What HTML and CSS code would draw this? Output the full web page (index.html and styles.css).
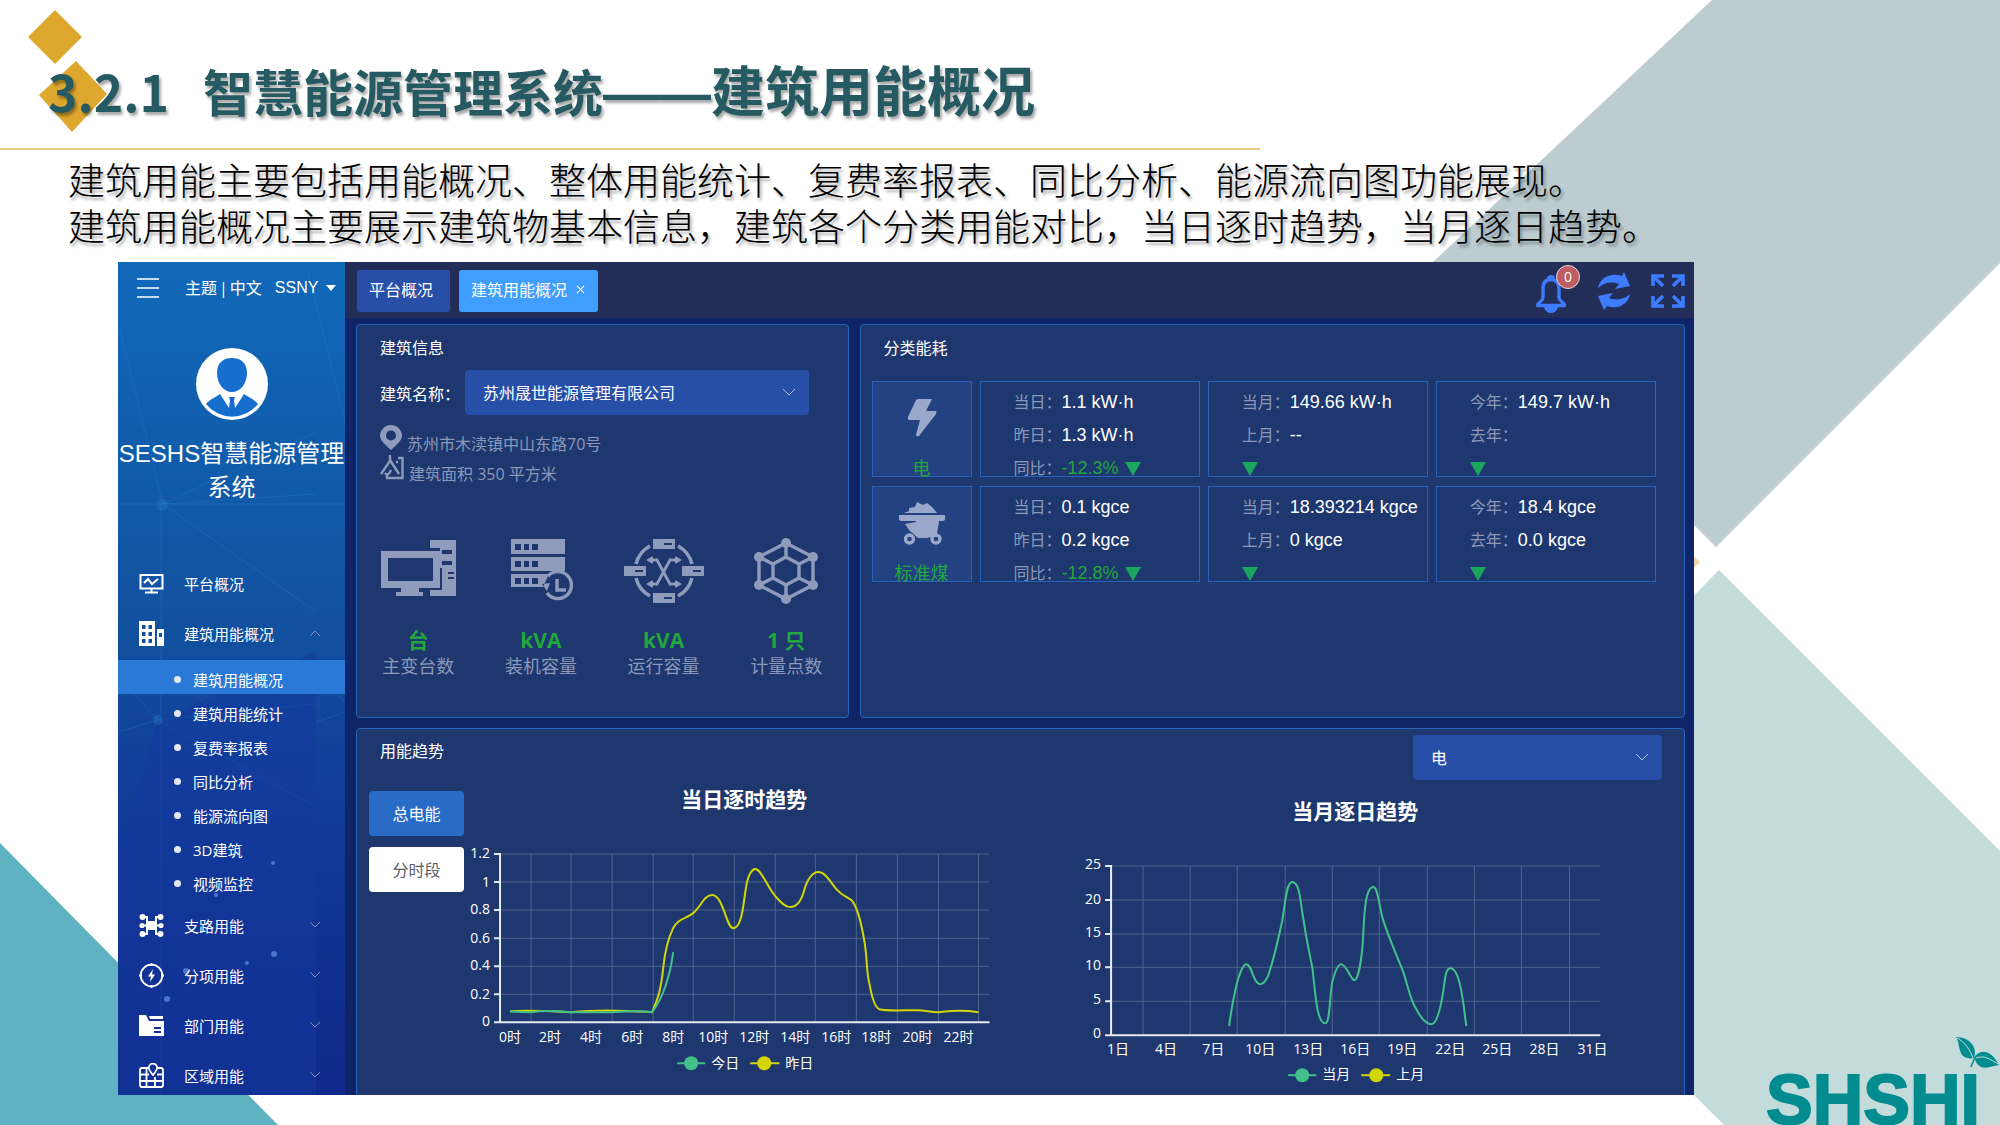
FILE: index.html
```html
<!DOCTYPE html>
<html lang="zh-CN">
<head>
<meta charset="utf-8">
<meta name="viewport" content="width=device-width, initial-scale=1">
<title>智慧能源管理系统 - 建筑用能概况</title>
<link rel="stylesheet" href="styles.css">
</head>
<body>
<svg class="backdrop" viewBox="0 0 2000 1125" preserveAspectRatio="none" aria-hidden="true">
  <path fill="#bcccd0" d="M1712 0H2000V263L1716 547 1432 263Z"/>
  <path fill="#c3dbdb" d="M1719 570L2000 851V1125H1724L1446 848Z"/>
  <path fill="#5fb2c1" d="M0 843L278 1125H0Z"/>
  <path fill="#f0d7ab" d="M1690 552L1700 562 1690 572Z"/>
</svg>
<div class="page">
  <header class="heading">
    <svg class="diamonds" width="80" height="124" viewBox="28 10 80 124" aria-hidden="true">
      <path fill="#dea72d" d="M55 10L82 37 55 64 28 37ZM76 61L107 94 72 132 39 95Z"/>
    </svg>
    <h1 class="heading-title"><span class="heading-number">3.2.1</span>智慧能源管理系统<span class="heading-dash">——</span><span class="heading-part">建筑用能概况</span></h1>
  </header>
  <div class="intro">
    <p>建筑用能主要包括用能概况、整体用能统计、复费率报表、同比分析、能源流向图功能展现。</p>
    <p>建筑用能概况主要展示建筑物基本信息，建筑各个分类用能对比，当日逐时趋势，当月逐日趋势。</p>
  </div>

  <div class="dashboard">
    <aside class="sidebar">
      <svg class="constellation" viewBox="0 0 227 833" preserveAspectRatio="none" aria-hidden="true">
        <g stroke="#2a86cc" stroke-opacity=".3" fill="none">
          <path d="M0 60L45 242 198 170M0 242H227M45 242L198 232M45 242L198 350M43 242V833M190 10L227 160M0 415L40 458 198 442M0 470L40 458 198 545M198 410L227 440M198 460L227 450"/>
        </g>
        <path fill="#13389d" fill-opacity=".5" d="M40 458L198 390V833H0V600Z"/>
        <g fill="#2f86cf" fill-opacity=".3"><circle cx="44" cy="243" r="6"/><circle cx="40" cy="458" r="5"/></g>
        <g fill="#5d86dc" fill-opacity=".8"><circle cx="155" cy="601" r="2"/><circle cx="98" cy="633" r="2"/><circle cx="156" cy="692" r="3"/><circle cx="129" cy="701" r="2"/><circle cx="49" cy="737" r="3"/><circle cx="68" cy="709" r="3"/></g>
      </svg>
      <div class="side-top">
        <button class="menu-toggle" type="button" aria-label="菜单">
          <svg width="22" height="20" viewBox="0 0 22 20"><path d="M0 1H22M0 10H22M0 19H22" stroke="#fff" stroke-width="1.4"/></svg>
        </button>
        <div class="side-lang"><a href="#">主题</a><span>|</span><a href="#">中文</a></div>
        <button class="side-user" type="button">SSNY
          <svg width="10" height="6" viewBox="0 0 10 6"><path fill="#fff" d="M0 0H10L5 6Z"/></svg>
        </button>
      </div>
      <svg class="avatar" width="72" height="72" viewBox="0 0 72 72" aria-hidden="true">
        <circle cx="36" cy="36" r="36" fill="#fff"/>
        <path fill="#166fcd" d="M36 10C44 10 51 14 51 25 51 36 44 44 36 44S21 36 21 25C21 14 28 10 36 10ZM10 56C14 51 20 49 24 46L33 60 34 52 33 49H39L38 52 39 60 48 46C52 49 58 51 62 56A33 33 0 0 1 10 56Z"/>
      </svg>
      <div class="side-title">SESHS智慧能源管理系统</div>
      <nav class="side-nav">
        <a class="nav-item" href="#">
          <svg class="nav-icon" viewBox="0 0 25 25" fill="none" stroke="#fff" stroke-width="2"><path d="M1.5 4H23.500V17.500H1.500ZM5 12L9 8 13 13 19 8M12.500 18V21M6 21.500H19"/></svg>
          <span>平台概况</span>
        </a>
        <a class="nav-item" href="#">
          <svg class="nav-icon" viewBox="0 0 25 25" fill="#fff" fill-rule="evenodd"><path d="M0 0H16V25H0ZM3 4V8H6.500V4ZM9.500 4V8H13V4ZM3 11V15H6.500V11ZM9.500 11V15H13V11ZM3 18V22H6.500V18ZM9.500 18V22H13V18ZM18 8H25V25H18ZM20 12V16H23V12Z"/></svg>
          <span>建筑用能概况</span>
          <svg class="nav-arrow" viewBox="0 0 12 12"><path d="M1 9L6 4 11 9"/></svg>
        </a>
        <ul class="sub-nav">
          <li class="sub-item active"><a href="#">建筑用能概况</a></li>
          <li class="sub-item"><a href="#">建筑用能统计</a></li>
          <li class="sub-item"><a href="#">复费率报表</a></li>
          <li class="sub-item"><a href="#">同比分析</a></li>
          <li class="sub-item"><a href="#">能源流向图</a></li>
          <li class="sub-item"><a href="#">3D建筑</a></li>
          <li class="sub-item"><a href="#">视频监控</a></li>
        </ul>
        <a class="nav-item" href="#">
          <svg class="nav-icon" viewBox="0 0 25 25"><path fill="none" stroke="#fff" stroke-width="2" d="M3 4H8V21H3M22 4H17V21H22M3 12.500H22"/><g fill="#fff"><rect x="8" y="8" width="9" height="9" rx="2"/><circle cx="3.500" cy="4" r="3"/><circle cx="3" cy="12.500" r="2.600"/><circle cx="3.500" cy="21" r="3"/><circle cx="21.500" cy="4" r="3"/><circle cx="22" cy="12.500" r="2.600"/><circle cx="21.500" cy="21" r="3"/></g></svg>
          <span>支路用能</span>
          <svg class="nav-arrow" viewBox="0 0 12 12"><path d="M1 3L6 8 11 3"/></svg>
        </a>
        <a class="nav-item" href="#">
          <svg class="nav-icon" viewBox="0 0 25 25"><circle cx="12.500" cy="12.500" r="10.800" fill="none" stroke="#fff" stroke-width="1.800"/><path stroke="#fff" stroke-width="2" d="M12.500 0V3M12.500 22V25M0 12.500H3M22 12.500H25"/><path fill="#fff" d="M14 6L9 13.500H12L11 19 16 11.500H13Z"/></svg>
          <span>分项用能</span>
          <svg class="nav-arrow" viewBox="0 0 12 12"><path d="M1 3L6 8 11 3"/></svg>
        </a>
        <a class="nav-item" href="#">
          <svg class="nav-icon" viewBox="0 0 25 25" fill="#fff" fill-rule="evenodd"><path d="M0 2H7L10 8H25V23H0ZM15 14V16H22V14ZM15 18V20H22V18ZM10 3H24V6H11Z"/></svg>
          <span>部门用能</span>
          <svg class="nav-arrow" viewBox="0 0 12 12"><path d="M1 3L6 8 11 3"/></svg>
        </a>
        <a class="nav-item" href="#">
          <svg class="nav-icon" viewBox="0 0 25 25" fill="none" stroke="#fff" stroke-width="1.800"><path d="M9 5H3Q1 5 1 7V22Q1 24 3 24H22Q24 24 24 22V7Q24 5 22 5H19M1 11.500H10M18 11.500H24M1 18H24M7.500 5V24M16 14V24M14 12C11 8 9.800 7 9.800 4.800A4.200 4.200 0 0 1 18.200 4.800C18.200 7 17 8 14 12Z"/></svg>
          <span>区域用能</span>
          <svg class="nav-arrow" viewBox="0 0 12 12"><path d="M1 3L6 8 11 3"/></svg>
        </a>
      </nav>
    </aside>

    <main class="main">
      <div class="topbar">
        <button class="tab" type="button">平台概况</button>
        <button class="tab tab-current" type="button">建筑用能概况
          <svg width="9" height="9" viewBox="0 0 10 10"><path d="M1 1L9 9M9 1L1 9" stroke="#fff" stroke-width="1.200"/></svg>
        </button>
        <div class="tools">
          <button class="tool tool-bell" type="button" aria-label="通知">
            <svg width="32" height="38" viewBox="0 0 32 38"><path fill="none" stroke="#3d7bff" stroke-width="3.400" stroke-linejoin="round" d="M16 4.500C10 4.500 8 9 8 14V23C8 26 3 27 2.500 30.500H29.500C29 27 24 26 24 23V14C24 9 22 4.500 16 4.500Z"/><path fill="#3d7bff" d="M9 32H23C22 36 19 38 16 38S10 36 9 32ZM12 4A4 4 0 0 1 20 4Z"/></svg>
            <span class="badge">0</span>
          </button>
          <button class="tool" type="button" aria-label="刷新">
            <svg width="34" height="38" viewBox="0 0 34 38"><path fill="#3d7bff" d="M1 16C3 5 14 0 25 4L27 0 33 14 18 17 22 12C14 9 6 11 1 16ZM33 22C31 33 20 38 10 34L7 38 1 24 16 21 12 26C20 29 28 27 33 22Z"/></svg>
          </button>
          <button class="tool" type="button" aria-label="全屏">
            <svg width="34" height="34" viewBox="0 0 34 34" fill="none" stroke="#3d7bff" stroke-width="3.600"><path d="M2 12V2H13M3 3L12 12M21 2H32V12M31 3L22 12M2 22V32H13M3 31L12 22M32 22V32H21M31 31L22 22"/></svg>
          </button>
        </div>
      </div>

      <div class="content">
        <div class="panel-row">
          <section class="panel building">
            <h2 class="panel-title">建筑信息</h2>
            <div class="field">
              <label for="building">建筑名称<span class="colon">：</span></label>
              <div class="select-box building-select">
                <select id="building"><option>苏州晟世能源管理有限公司</option></select>
                <svg class="select-arrow" viewBox="0 0 12 12"><path d="M0 3L6 9 12 3"/></svg>
              </div>
            </div>
            <ul class="facts">
              <li>
                <svg width="22" height="25" viewBox="0 0 22 25"><path fill="#8f9bbb" fill-rule="evenodd" d="M11 0A11 11 0 0 1 22 11C22 16 16 20 11 25 6 20 0 16 0 11A11 11 0 0 1 11 0ZM11 5.500A5 5 0 1 0 11 15.500 5 5 0 0 0 11 5.500Z"/></svg>
                <span>苏州市木渎镇中山东路70号</span>
              </li>
              <li>
                <svg width="24" height="25" viewBox="0 0 24 25" fill="none" stroke="#8f9bbb" stroke-width="2.400"><path d="M10 0V6L1 19M10 5L19 19M16 7H18M22.500 2V23H7V19M5 18Q8 22 11 15M18 3H23"/></svg>
                <span>建筑面积 350 平方米</span>
              </li>
            </ul>
            <ul class="stats">
              <li>
                <svg width="80" height="66" viewBox="0 0 80 66" fill="#8f9bbb" fill-rule="evenodd"><path d="M3 13H62V50H3ZM10 20V43H55V20ZM23 50H41V54H45V58H18V54H23ZM52 2H78V58H52V52H64V30H62V10H52ZM64 12V16H74V12ZM64 23V27H74V23ZM70 34V36H76V34ZM70 39V41H76V39Z"/></svg>
                <b>台</b><span>主变台数</span>
              </li>
              <li>
                <svg width="80" height="66" viewBox="0 0 80 66"><path fill="#8f9bbb" fill-rule="evenodd" d="M10 1H64V16H10ZM14 6V12H20V6ZM23 6V12H28V6ZM31 6V12H37V6ZM10 19H64V33H10ZM14 23V29H20V23ZM23 23V29H28V23ZM31 23V29H37V23ZM10 36H48L42 49H10ZM14 40V46H20V40ZM23 40V46H28V40ZM31 40V46H37V40ZM41 46L49 45 46 53Z"/><path fill="none" stroke="#8f9bbb" stroke-width="3.400" d="M47 38A13.500 13.500 0 1 1 46 55M56 41V52H65"/></svg>
                <b>kVA</b><span>装机容量</span>
              </li>
              <li>
                <svg width="80" height="66" viewBox="0 0 80 66"><g fill="none" stroke="#8f9bbb" stroke-width="3.400"><path d="M12 26A28 28 0 0 1 26 8M54 8A28 28 0 0 1 68 26M68 40A28 28 0 0 1 54 58M26 58A28 28 0 0 1 12 40"/><path stroke-width="2.800" d="M27 22H33L46 46H53M27 46H33L46 22H53"/></g><path fill="#8f9bbb" fill-rule="evenodd" d="M29 1H51V11H29ZM40 5V7H48V5ZM29 55H51V65H29ZM40 59V61H48V59ZM0 28H22V38H0ZM11 32V34H19V32ZM58 28H80V38H58ZM69 32V34H77V32ZM22 22L29 18V26ZM22 46L29 42V50ZM58 22L51 18V26ZM58 46L51 42V50Z"/></svg>
                <b>kVA</b><span>运行容量</span>
              </li>
              <li>
                <svg width="80" height="66" viewBox="0 0 80 66"><g fill="none" stroke="#8f9bbb" stroke-width="3.400"><path d="M40 5L67 19V47L40 61 13 47V19ZM40 19L53 26V40L40 47 27 40V26ZM40 5V19M40 47V61M13 19L27 26M67 19L53 26M13 47L27 40M67 47L53 40"/></g><g fill="#8f9bbb"><circle cx="40" cy="5" r="5"/><circle cx="40" cy="61" r="5"/><circle cx="13" cy="19" r="5"/><circle cx="67" cy="19" r="5"/><circle cx="13" cy="47" r="5"/><circle cx="67" cy="47" r="5"/></g></svg>
                <b>1 只</b><span>计量点数</span>
              </li>
            </ul>
          </section>

          <section class="panel energy">
            <h2 class="panel-title">分类能耗</h2>
            <div class="energy-grid">
              <div class="kind">
                <svg width="46" height="46" viewBox="0 0 46 46"><path fill="#9aa9cb" d="M19 2H33L27 14H37Q38 15 37 17L20 39Q17 40 17 38L21 23H10Q8 22 9 20L17 3Z"/></svg>
                <span>电</span>
              </div>
              <dl class="cell"><div><dt>当日<span class="colon">：</span></dt><dd>1.1 kW·h</dd></div><div><dt>昨日<span class="colon">：</span></dt><dd>1.3 kW·h</dd></div><div><dt>同比<span class="colon">：</span></dt><dd class="down">-12.3%</dd><i class="fall"></i></div></dl>
              <dl class="cell"><div><dt>当月<span class="colon">：</span></dt><dd>149.66 kW·h</dd></div><div><dt>上月<span class="colon">：</span></dt><dd>--</dd></div><div><i class="fall"></i></div></dl>
              <dl class="cell"><div><dt>今年<span class="colon">：</span></dt><dd>149.7 kW·h</dd></div><div><dt>去年<span class="colon">：</span></dt><dd></dd></div><div><i class="fall"></i></div></dl>
              <div class="kind">
                <svg width="46" height="46" viewBox="0 0 46 46"><path fill="#9aa9cb" d="M5 11L10 9V6L16 5 18 0 24 3 28 1 33 5 38 11ZM0 13H46V17Q46 19 43 19H40L38 32 32 35 28 36H19L10 28 6 22 17 20V19H3Q0 19 0 17Z"/><g fill="#234281" stroke="#9aa9cb" stroke-width="3.400"><circle cx="10.500" cy="37" r="4"/><circle cx="37" cy="37" r="4"/></g></svg>
                <span>标准煤</span>
              </div>
              <dl class="cell"><div><dt>当日<span class="colon">：</span></dt><dd>0.1 kgce</dd></div><div><dt>昨日<span class="colon">：</span></dt><dd>0.2 kgce</dd></div><div><dt>同比<span class="colon">：</span></dt><dd class="down">-12.8%</dd><i class="fall"></i></div></dl>
              <dl class="cell"><div><dt>当月<span class="colon">：</span></dt><dd>18.393214 kgce</dd></div><div><dt>上月<span class="colon">：</span></dt><dd>0 kgce</dd></div><div><i class="fall"></i></div></dl>
              <dl class="cell"><div><dt>今年<span class="colon">：</span></dt><dd>18.4 kgce</dd></div><div><dt>去年<span class="colon">：</span></dt><dd>0.0 kgce</dd></div><div><i class="fall"></i></div></dl>
            </div>
          </section>
        </div>

        <section class="panel trend">
          <div class="trend-day">
            <h2 class="panel-title">用能趋势</h2>
            <div class="trend-body">
              <div class="modes">
                <button class="mode mode-on" type="button">总电能</button>
                <button class="mode" type="button">分时段</button>
              </div>
              <svg class="chart" viewBox="464 785 556 315" role="img" aria-label="当日逐时趋势">
                <text class="chart-title" x="744" y="809">当日逐时趋势</text>
                <path class="grid" d="M500 856H989M500 884H989M500 912H989M500 940H989M500 968H989M500 996H989M531 856V1024M571 856V1024M612 856V1024M653 856V1024M693 856V1024M734 856V1024M775 856V1024M815 856V1024M856 856V1024M897 856V1024M938 856V1024M978 856V1024"/>
                <path class="axis" d="M500 855V1024M494 1024H989M494 856H500M494 884H500M494 912H500M494 940H500M494 968H500M494 996H500"/>
                <g class="tick-y"><text x="490" y="860">1.2</text><text x="490" y="889">1</text><text x="490" y="916">0.8</text><text x="490" y="945">0.6</text><text x="490" y="972">0.4</text><text x="490" y="1001">0.2</text><text x="490" y="1028">0</text></g>
                <g class="tick-x"><text x="510" y="1044">0时</text><text x="550" y="1044">2时</text><text x="591" y="1044">4时</text><text x="632" y="1044">6时</text><text x="673" y="1044">8时</text><text x="713" y="1044">10时</text><text x="754" y="1044">12时</text><text x="795" y="1044">14时</text><text x="836" y="1044">16时</text><text x="876" y="1044">18时</text><text x="917" y="1044">20时</text><text x="958" y="1044">22时</text></g>
                <path class="line yellow" d="M510 1013C530 1012 550 1013 571 1014 590 1012 612 1012 632 1013 641 1013 648 1014 652 1014 658 1000 661 990 663 970 665 950 668 940 673 930 678 920 686 921 693 915 701 908 704 897 712 897 723 897 726 930 733 930 742 930 743 905 746 888 748 876 752 871 755 871 761 871 767 889 775 898 781 905 785 909 790 909 797 909 801 903 804 892 807 880 813 874 818 874 825 874 830 884 836 891 843 899 848 899 852 903 858 911 861 925 864 943 867 960 866 975 869 985 871 997 874 1009 879 1011 885 1013 900 1012 917 1012 925 1012 930 1014 938 1014 948 1013 958 1011 978 1014"/>
                <path class="line green" d="M510 1013C520 1014 525 1014 531 1014 545 1012 560 1013 571 1014 590 1014 600 1014 612 1014 625 1013 640 1012 652 1014 660 1003 669 985 673 954"/>
                <path class="legend-line green" d="M677 1065H705"/><circle cx="691" cy="1065" r="7" fill="#43c08a"/><text class="legend" x="711" y="1070">今日</text>
                <path class="legend-line yellow" d="M750 1065H779"/><circle cx="764" cy="1065" r="7" fill="#d2d604"/><text class="legend" x="785" y="1070">昨日</text>
              </svg>
            </div>
          </div>
          <div class="trend-month">
            <div class="select-box kind-select">
              <select aria-label="能源种类"><option>电</option></select>
              <svg class="select-arrow" viewBox="0 0 12 12"><path d="M0 3L6 9 12 3"/></svg>
            </div>
            <svg class="chart" viewBox="1021 785 663 315" role="img" aria-label="当月逐日趋势">
              <text class="chart-title" x="1355" y="820">当月逐日趋势</text>
              <path class="grid" d="M1111 867H1600M1111 901H1600M1111 935H1600M1111 968H1600M1111 1002H1600M1143 867V1035M1190 867V1035M1237 867V1035M1285 867V1035M1332 867V1035M1379 867V1035M1427 867V1035M1474 867V1035M1521 867V1035M1569 867V1035"/>
              <path class="axis" d="M1111 866V1036M1105 1036H1600M1105 867H1111M1105 901H1111M1105 935H1111M1105 968H1111M1105 1002H1111"/>
              <g class="tick-y"><text x="1101" y="870">25</text><text x="1101" y="905">20</text><text x="1101" y="938">15</text><text x="1101" y="971">10</text><text x="1101" y="1005">5</text><text x="1101" y="1039">0</text></g>
              <g class="tick-x"><text x="1118" y="1055">1日</text><text x="1166" y="1055">4日</text><text x="1213" y="1055">7日</text><text x="1260" y="1055">10日</text><text x="1308" y="1055">13日</text><text x="1355" y="1055">16日</text><text x="1402" y="1055">19日</text><text x="1450" y="1055">22日</text><text x="1497" y="1055">25日</text><text x="1544" y="1055">28日</text><text x="1592" y="1055">31日</text></g>
              <path class="line green" d="M1229 1027C1231 1010 1233 1000 1236 987 1239 975 1243 965 1246 965 1252 965 1253 985 1260 985 1264 985 1268 979 1270 970 1275 955 1279 935 1282 922 1285 905 1286 883 1292 883 1299 883 1300 900 1302 913 1306 940 1309 953 1312 968 1315 990 1316 1024 1325 1024 1330 1024 1329 999 1332 983 1335 971 1338 965 1341 965 1346 965 1351 981 1354 981 1358 981 1361 960 1362 950 1364 930 1363 888 1373 888 1377 888 1378 900 1382 918 1388 938 1397 957 1403 973 1408 988 1410 1001 1416 1010 1421 1020 1427 1025 1431 1025 1436 1025 1439 1013 1441 1003 1445 985 1444 969 1450 969 1460 969 1463 1005 1466 1027"/>
              <path class="legend-line green" d="M1288 1076H1316"/><circle cx="1302" cy="1076" r="7" fill="#43c08a"/><text class="legend" x="1322" y="1080">当月</text>
              <path class="legend-line yellow" d="M1361 1076H1390"/><circle cx="1376" cy="1076" r="7" fill="#d2d604"/><text class="legend" x="1396" y="1080">上月</text>
            </svg>
          </div>
        </section>
      </div>
    </main>
  </div>
</div>
<svg class="logo" width="234" height="90" viewBox="1766 1035 234 90" role="img" aria-label="SHSHI">
  <text class="logo-text" x="1766" y="1124">SHSHI</text>
  <path fill="#028c90" d="M1956 1037C1970 1037 1978 1048 1974 1058 1970 1059 1966 1058 1963 1056 1958 1050 1960 1044 1956 1037ZM1975 1056C1982 1048 1992 1051 1999 1065 1992 1066 1988 1069 1981 1067 1976 1064 1975 1061 1975 1056Z"/>
  <path fill="none" stroke="#c3dbdb" stroke-width="1" d="M1957 1038C1965 1042 1970 1050 1973 1058M1976 1058C1984 1055 1990 1059 1998 1064"/>
  <path fill="none" stroke="#028c90" stroke-width="1.500" d="M1971 1067L1975 1057"/>
</svg>
</body>
</html>
```
FILE: styles.css
```css
* {
  box-sizing: border-box;
}

body {
  margin: 0;
  background: #fff;
  color: #fff;
  font-family: "Open Sans", "Noto Sans CJK SC", sans-serif;
  font-size: 16px;
}

h1, h2, p, ul, dl, dd {
  margin: 0;
  padding: 0;
}

ul {
  list-style: none;
}

a {
  color: inherit;
  text-decoration: none;
}

button {
  margin: 0;
  padding: 0;
  border: 0;
  background: none;
  color: inherit;
  font: inherit;
}

svg {
  display: block;
  flex: none;
}

.backdrop {
  position: absolute;
  inset: 0;
  width: 100%;
  height: 100%;
}

.page {
  position: relative;
  display: flex;
  flex-direction: column;
  height: 100vh;
  padding-bottom: 30px;
}

/* slide heading */

.heading {
  position: relative;
  width: 63%;
  padding: 55px 0 25px 48px;
  border-bottom: 2px solid #eacb83;
}

.diamonds {
  position: absolute;
  left: 28px;
  top: 10px;
}

.heading-title {
  position: relative;
  height: 68px;
  color: #265a62;
  font-family: "Noto Sans CJK SC", sans-serif;
  font-size: 50px;
  font-weight: 700;
  line-height: 68px;
  white-space: nowrap;
  text-shadow: 2px 3px 3px rgba(0, 0, 0, .35);
}

.heading-number {
  margin-right: 34px;
}

.heading-dash {
  font-family: "Liberation Sans", sans-serif;
  font-size: 54px;
}

.heading-part {
  font-size: 54px;
}

.intro {
  padding: 6px 0 14px 68px;
  color: #000;
  font-family: "Noto Sans CJK SC", serif;
  font-size: 37px;
  font-weight: 300;
  line-height: 46px;
  white-space: nowrap;
  text-shadow: 2px 3px 3px rgba(0, 0, 0, .35);
}

/* dashboard shell */

.dashboard {
  display: flex;
  flex: 1;
  min-height: 0;
  margin: 0 306px 0 118px;
  overflow: hidden;
  background: #10246a;
}

.sidebar {
  position: relative;
  flex: none;
  width: 227px;
  background: linear-gradient(#1169b9, #11509f 45%, #11409a 60%, #102f8e 85%, #0f2a8a);
}

.constellation {
  position: absolute;
  inset: 0;
  width: 100%;
  height: 100%;
}

.side-top {
  position: relative;
  display: flex;
  align-items: center;
  height: 54px;
  padding: 0 0 2px 19px;
  line-height: 24px;
}

.side-lang {
  display: flex;
  gap: 2px;
  margin-left: 26px;
}

.side-user {
  display: flex;
  align-items: center;
  gap: 8px;
  margin-left: 13px;
  font-family: "Liberation Sans", sans-serif;
}

.avatar {
  position: relative;
  margin: 32px auto 17px;
}

.side-title {
  position: relative;
  font-family: "Liberation Sans", "Noto Sans CJK SC", sans-serif;
  font-size: 24px;
  line-height: 34px;
  text-align: center;
}

.side-nav {
  position: relative;
  margin-top: 53px;
  font-size: 15px;
}

.nav-item {
  display: flex;
  align-items: center;
  height: 50px;
  padding: 0 24px 0 21px;
}

.nav-icon {
  width: 25px;
  height: 25px;
  margin-right: 20px;
}

.nav-arrow {
  width: 12px;
  height: 12px;
  margin-left: auto;
  fill: none;
  stroke: #7f93c4;
}

.sub-nav {
  padding: 2px 0;
}

.sub-item a {
  display: flex;
  align-items: center;
  gap: 12px;
  height: 34px;
  padding: 5px 0 0 56px;
}

.sub-item a::before {
  content: "";
  width: 7px;
  height: 7px;
  border-radius: 50%;
  background: #e4e8ee;
}

.sub-item.active {
  background: #2a79d6;
}

.main {
  flex: 1;
  min-width: 0;
}

.topbar {
  display: flex;
  gap: 9px;
  height: 56px;
  padding: 8px 9px 6px 12px;
  background: #222e58;
}

.tab {
  display: flex;
  align-items: center;
  gap: 9px;
  height: 42px;
  padding: 0 17px 4px 12px;
  border-radius: 3px;
  background: #274fa7;
  white-space: nowrap;
}

.tab-current {
  padding-right: 13px;
  background: #409eff;
}

.tools {
  display: flex;
  align-items: center;
  gap: 20px;
  margin-left: auto;
}

.tool {
  position: relative;
}

.tool-bell {
  margin: 6px 10px 0 0;
}

.badge {
  position: absolute;
  top: -10px;
  right: -13px;
  width: 24px;
  height: 24px;
  border: 1px solid #e8d5d8;
  border-radius: 50%;
  background: #bd5f62;
  font-size: 14px;
  line-height: 22px;
  text-align: center;
}

/* panels */

.content {
  display: flex;
  flex-direction: column;
  gap: 10px;
  padding: 6px 9px 0 11px;
}

.panel-row {
  display: flex;
  gap: 11px;
}

.panel {
  border: 1px solid #2763ba;
  border-radius: 4px;
  background: #1e376e;
}

.panel-title {
  padding-left: 23px;
  font-size: 16px;
  font-weight: 400;
  line-height: 24px;
}

.colon {
  font-family: "Noto Sans CJK TC", sans-serif;
}

.building {
  flex: 492;
  min-width: 0;
  padding: 11px 0 39px;
}

.energy {
  flex: 826;
  min-width: 0;
  padding-top: 11px;
}

.field {
  display: flex;
  align-items: center;
  margin: 10px 39px 0 23px;
}

.field label {
  flex: none;
  width: 85px;
}

.select-box {
  position: relative;
}

.select-box select {
  width: 100%;
  height: 45px;
  padding: 0 40px 0 18px;
  border: 0;
  border-radius: 4px;
  background: #274fa7;
  color: #fff;
  font: inherit;
  appearance: none;
}

.building-select {
  flex: 1;
}

.select-arrow {
  position: absolute;
  right: 14px;
  top: 16px;
  width: 12px;
  height: 12px;
  fill: none;
  stroke: #b4c0dc;
  pointer-events: none;
}

.facts {
  margin: 10px 23px 0;
  color: #8b98b9;
}

.facts li {
  display: flex;
  gap: 5px;
  height: 30px;
}

.facts span {
  align-self: flex-end;
  line-height: 22px;
}

.stats {
  display: grid;
  grid-template-columns: repeat(4, 1fr);
  margin-top: 53px;
}

.stats li {
  display: flex;
  flex-direction: column;
  align-items: center;
  color: #8b98b9;
  font-size: 18px;
  line-height: 24px;
}

.stats b {
  margin-top: 22px;
  color: #22a63f;
  font-size: 21px;
  line-height: 28px;
}

.energy-grid {
  display: grid;
  grid-template-columns: 100px repeat(3, 1fr);
  grid-auto-rows: 96px;
  gap: 9px 8px;
  margin: 21px 28px 0 11px;
}

.kind {
  display: flex;
  flex-direction: column;
  align-items: center;
  gap: 13px;
  padding-top: 15px;
  border: 1px solid #2763ba;
  background: #234281;
  color: #22a63f;
  font-size: 18px;
  line-height: 24px;
}

.cell {
  padding: 4px 0 0 33px;
  border: 1px solid #2763ba;
  white-space: nowrap;
}

.cell div {
  display: flex;
  align-items: center;
  height: 33px;
}

.cell dt {
  padding-bottom: 2px;
  color: #8b98b9;
  line-height: 22px;
}

.cell dd {
  font-family: "Liberation Sans", sans-serif;
  font-size: 18px;
}

.cell .down {
  margin-right: 6px;
  color: #22a63f;
}

.fall {
  border: 8px solid transparent;
  border-top: 14px solid #1ba65f;
  border-bottom: 0;
}

/* trend charts */

.trend {
  display: flex;
}

.trend-day,
.trend-month {
  flex: 1;
  min-width: 0;
}

.trend-day {
  padding-top: 10px;
}

.trend-month {
  padding-top: 6px;
}

.trend-body {
  display: flex;
  margin-top: 20px;
  padding-left: 12px;
}

.modes {
  display: flex;
  flex: none;
  flex-direction: column;
  gap: 11px;
  width: 95px;
  padding-top: 8px;
}

.mode {
  height: 45px;
  padding-bottom: 2px;
  border-radius: 4px;
  background: #fff;
  color: #5c5f66;
}

.mode-on {
  background: #296cc8;
  color: #fff;
}

.kind-select {
  width: 249px;
  margin: 0 22px 4px auto;
}

.chart {
  flex: 1;
  width: 100%;
  min-width: 0;
}

.chart text {
  fill: #fff;
  font-size: 14px;
}

.chart .chart-title {
  font-size: 21px;
  font-weight: 700;
  text-anchor: middle;
}

.tick-x {
  text-anchor: middle;
}

.tick-y {
  text-anchor: end;
}

.grid {
  fill: none;
  stroke: #fff;
  stroke-opacity: .22;
}

.axis {
  fill: none;
  stroke: #e6eaf2;
  stroke-width: 2;
}

.line {
  fill: none;
  stroke-width: 2;
}

.legend-line {
  stroke-width: 2;
}

.green {
  stroke: #43c08a;
}

.yellow {
  stroke: #d2d604;
}

.logo {
  position: absolute;
  right: 0;
  bottom: 0;
}

.logo-text {
  fill: #028c90;
  stroke: #028c90;
  stroke-width: 2;
  font-family: "Liberation Sans", sans-serif;
  font-size: 70px;
  font-weight: 700;
}
```
